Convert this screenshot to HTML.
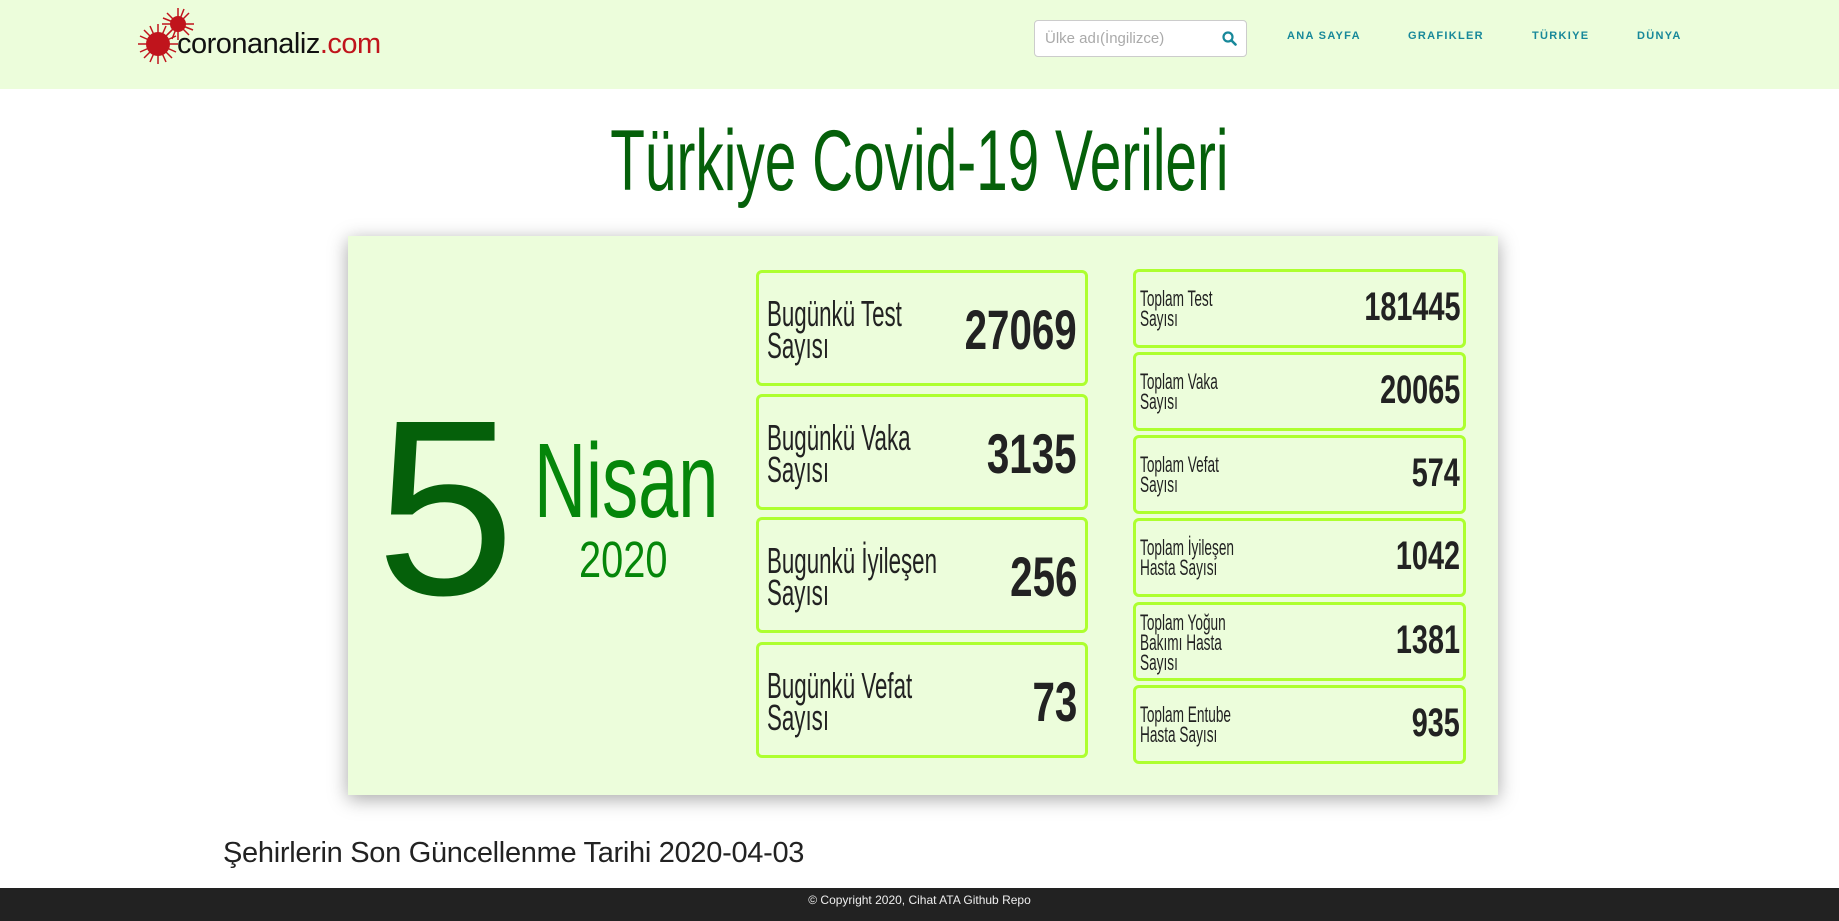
<!DOCTYPE html>
<html><head><meta charset="utf-8"><style>
*{margin:0;padding:0;box-sizing:border-box}
body{width:1839px;height:921px;overflow:hidden;background:#fff;font-family:"Liberation Sans",sans-serif;position:relative}
.hdr{position:absolute;left:0;top:0;width:1839px;height:89px;background:#ecfddb}
.abs{position:absolute}
.c{display:inline-block;transform:scaleX(.62);white-space:nowrap}
.nav{position:absolute;top:30px;font-size:11px;font-weight:bold;color:#17889a;letter-spacing:1.3px}
.card{position:absolute;left:348px;top:236px;width:1150px;height:559px;background:#ecfddb;box-shadow:0 4px 18px rgba(0,0,0,.35)}
.bx{position:absolute;border:3px solid #adff2f;border-radius:6px;background:#ecfddb;color:#222}
.lb{position:absolute;left:8px;line-height:.9;transform-origin:left center}
.num{position:absolute;right:8px;font-weight:bold;transform-origin:right center;transform:scaleX(.72)}
.r .lb{left:4px}.r .num{right:3px}
</style></head><body>
<div class="hdr"></div>
<svg class="abs" style="left:136px;top:8px" width="70" height="62" viewBox="0 0 70 62">
<g stroke="#c0141c" stroke-width="1.5">
<g transform="translate(42,16)"><line x1="-16" y1="0" x2="16" y2="0"/><line x1="0" y1="-16" x2="0" y2="16"/><line x1="-11" y1="-11" x2="11" y2="11"/><line x1="-11" y1="11" x2="11" y2="-11"/><line x1="-15" y1="-6" x2="15" y2="6"/><line x1="-6" y1="15" x2="6" y2="-15"/></g>
<g transform="translate(22,36)"><line x1="-20" y1="0" x2="20" y2="0"/><line x1="0" y1="-20" x2="0" y2="20"/><line x1="-14" y1="-14" x2="14" y2="14"/><line x1="-14" y1="14" x2="14" y2="-14"/><line x1="-18" y1="-8" x2="18" y2="8"/><line x1="-8" y1="18" x2="8" y2="-18"/><line x1="-18" y1="8" x2="18" y2="-8"/><line x1="8" y1="18" x2="-8" y2="-18"/></g>
</g>
<circle cx="42" cy="16" r="8" fill="#c0141c"/><circle cx="22" cy="36" r="12" fill="#c0141c"/>
</svg>
<div class="abs" style="left:177px;top:28px;font-size:29px;color:#111;letter-spacing:-.5px">coronanaliz<span style="color:#c0141c">.com</span></div>
<div class="abs" style="left:1034px;top:20px;width:213px;height:37px;background:#fff;border:1px solid #ccc;border-radius:4px"></div>
<div class="abs" style="left:1045px;top:30px;font-size:15px;color:#aaa">Ülke adı(İngilizce)</div>
<svg class="abs" style="left:1222px;top:31px" width="15" height="15" viewBox="0 0 15 15"><circle cx="6" cy="6" r="4.5" fill="none" stroke="#17889a" stroke-width="2.2"/><line x1="9.5" y1="9.5" x2="13.5" y2="13.5" stroke="#17889a" stroke-width="2.6" stroke-linecap="round"/></svg>
<div class="nav" style="left:1287px">ANA SAYFA</div>
<div class="nav" style="left:1408px">GRAFIKLER</div>
<div class="nav" style="left:1532px">TÜRKIYE</div>
<div class="nav" style="left:1637px">DÜNYA</div>
<div class="abs" style="left:0;width:1839px;top:112px;text-align:center;font-size:86px;color:#05600a"><span class="c" style="transform:scaleX(.66)">Türkiye Covid-19 Verileri</span></div>
<div class="card">
<div class="abs" style="left:28px;top:147px;font-size:250px;color:#05600a;line-height:1">5</div>
<div class="abs" style="left:186px;top:192px;font-size:106px;color:#05860a;line-height:1"><span class="c" style="transform:scaleX(.68);transform-origin:left">Nisan</span></div>
<div class="abs" style="left:231px;top:298px;font-size:51px;color:#05860a;line-height:1"><span class="c" style="transform:scaleX(.78);transform-origin:left">2020</span></div>

<div class="bx" style="left:408px;top:34px;width:332px;height:116px"><div class="lb c" style="top:25px;font-size:36px">Bugünkü Test<br>Sayısı</div><div class="num c" style="top:24px;font-size:56px">27069</div></div>
<div class="bx" style="left:408px;top:158px;width:332px;height:116px"><div class="lb c" style="top:25px;font-size:36px">Bugünkü Vaka<br>Sayısı</div><div class="num c" style="top:24px;font-size:56px">3135</div></div>
<div class="bx" style="left:408px;top:281px;width:332px;height:116px"><div class="lb c" style="top:25px;font-size:36px">Bugunkü İyileşen<br>Sayısı</div><div class="num c" style="top:24px;font-size:56px">256</div></div>
<div class="bx" style="left:408px;top:406px;width:332px;height:116px"><div class="lb c" style="top:25px;font-size:36px">Bugünkü Vefat<br>Sayısı</div><div class="num c" style="top:24px;font-size:56px">73</div></div>

<div class="r">
<div class="bx" style="left:785px;top:33px;width:333px;height:79px"><div class="lb c" style="top:17px;font-size:22px">Toplam Test<br>Sayısı</div><div class="num c" style="top:13px;font-size:40px">181445</div></div>
<div class="bx" style="left:785px;top:116px;width:333px;height:79px"><div class="lb c" style="top:17px;font-size:22px">Toplam Vaka<br>Sayısı</div><div class="num c" style="top:13px;font-size:40px">20065</div></div>
<div class="bx" style="left:785px;top:199px;width:333px;height:79px"><div class="lb c" style="top:17px;font-size:22px">Toplam Vefat<br>Sayısı</div><div class="num c" style="top:13px;font-size:40px">574</div></div>
<div class="bx" style="left:785px;top:282px;width:333px;height:79px"><div class="lb c" style="top:17px;font-size:22px">Toplam İyileşen<br>Hasta Sayısı</div><div class="num c" style="top:13px;font-size:40px">1042</div></div>
<div class="bx" style="left:785px;top:366px;width:333px;height:79px"><div class="lb c" style="top:8px;font-size:22px">Toplam Yoğun<br>Bakımı Hasta<br>Sayısı</div><div class="num c" style="top:13px;font-size:40px">1381</div></div>
<div class="bx" style="left:785px;top:449px;width:333px;height:79px"><div class="lb c" style="top:17px;font-size:22px">Toplam Entube<br>Hasta Sayısı</div><div class="num c" style="top:13px;font-size:40px">935</div></div>
</div>
</div>
<div class="abs" style="left:223px;top:837px;font-size:29px;color:#222;letter-spacing:-.3px">Şehirlerin Son Güncellenme Tarihi 2020-04-03</div>
<div class="abs" style="left:0;top:888px;width:1839px;height:33px;background:#222;color:#eee;font-size:12px;text-align:center;line-height:25px">© Copyright 2020, Cihat ATA Github Repo</div>
</body></html>
